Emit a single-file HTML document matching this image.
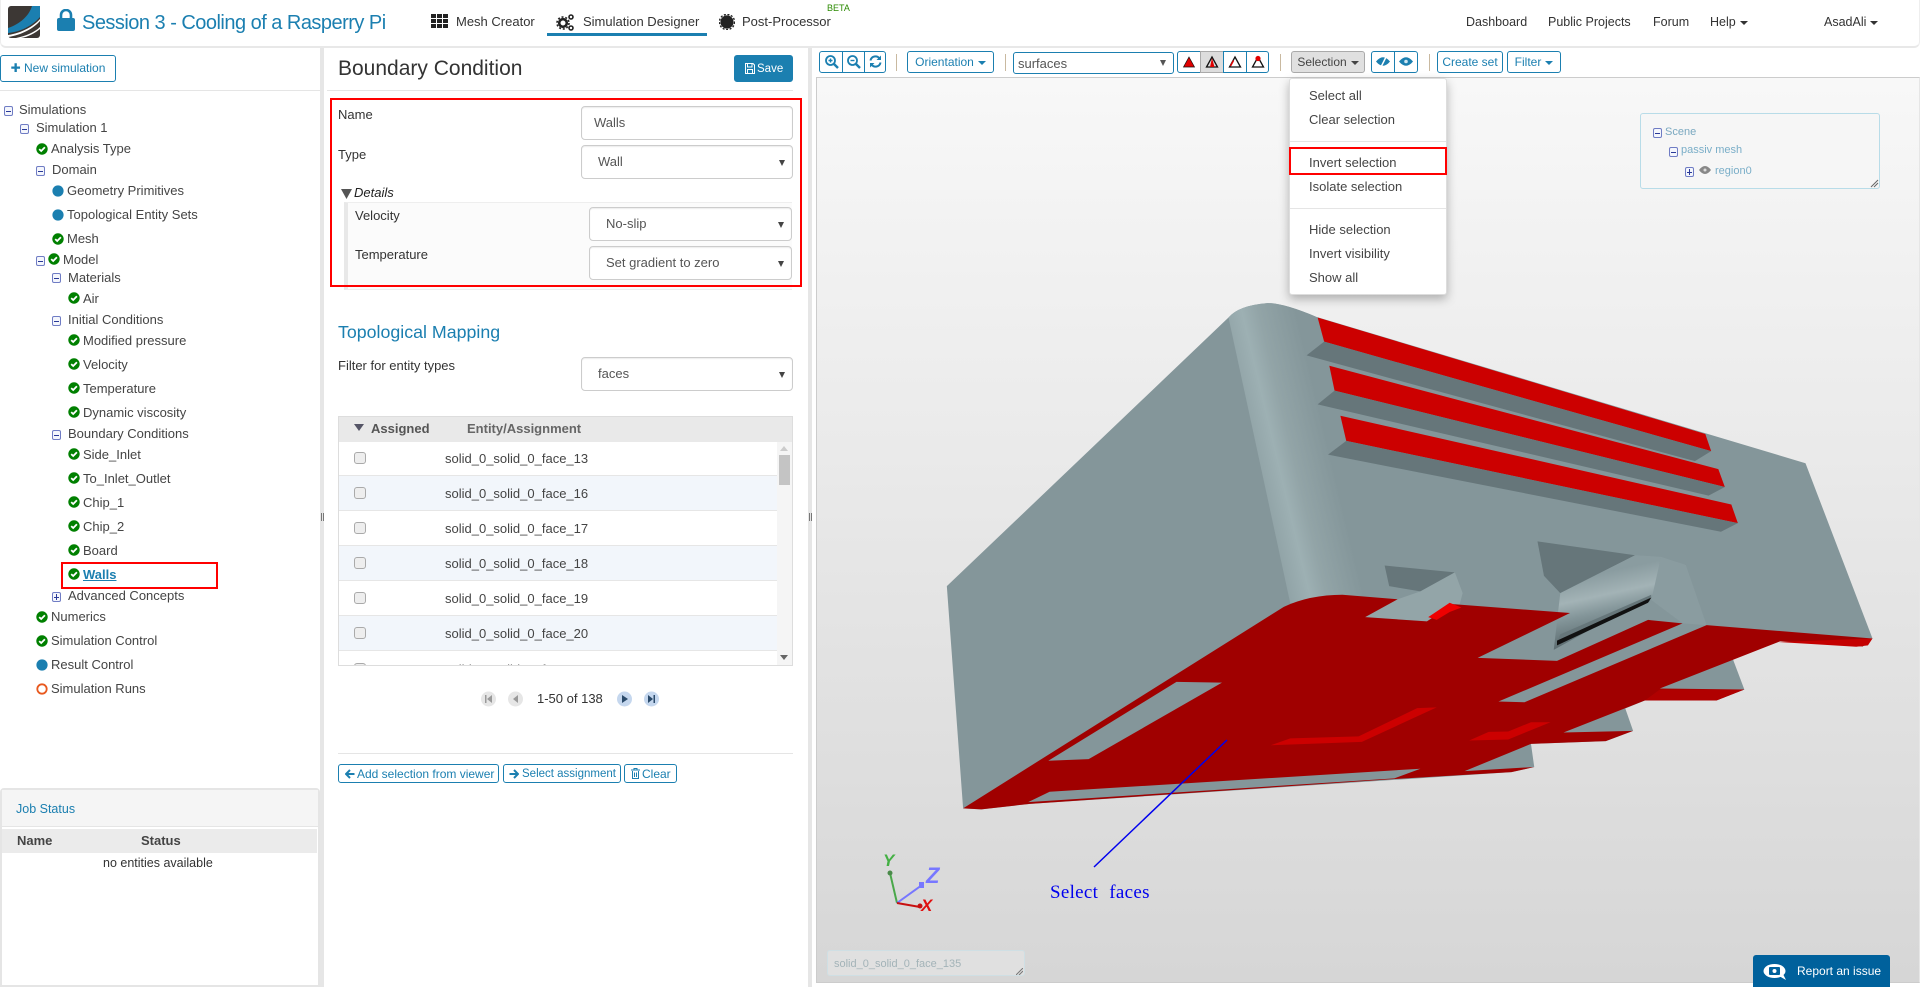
<!DOCTYPE html>
<html><head><meta charset="utf-8"><title>Boundary Condition</title>
<style>
*{box-sizing:border-box}
html,body{margin:0;padding:0;width:1920px;height:987px;overflow:hidden;background:#fff;font-family:"Liberation Sans",sans-serif;color:#444}
.a,.t,.b,.s,.tb,.i{position:absolute}
.t{white-space:nowrap;font-size:13px;line-height:20px;height:20px}
.i{display:block;width:12px;height:12px}
.bx{position:absolute;width:9px;height:10px;border:1px solid #6f7cc4;border-radius:2px;background:#f4f6fc}
.bx:after{content:"";position:absolute;left:1px;right:1px;top:3.500px;height:1.400px;background:#2a3a98}
.bx.p:before{content:"";position:absolute;left:3px;top:1px;bottom:1px;width:1.400px;background:#2a3a98}
.s{background:#fff;border:1px solid #ccc;border-radius:4px;font-size:13px;color:#555;line-height:32px;box-shadow:inset 0 1px 1px rgba(0,0,0,.075)}
.s.sel:after{content:"";position:absolute;right:7px;top:14px;border:3px solid transparent;border-top:6px solid #444;border-bottom:0}
.b{background:#fff;border:1px solid #1b7fb0;border-radius:3px;color:#1b7fb0;font-size:12px;text-align:center;white-space:nowrap}
.tb{height:22px;top:51px;background:#fff;border:1px solid #1b7fb0;color:#1b7fb0;font-size:12px;line-height:21px;text-align:center;white-space:nowrap;border-radius:3px}
.car{display:inline-block;width:0;height:0;border:4px solid transparent;border-top:4px solid currentColor;border-bottom:0;vertical-align:middle;margin-left:4px}
.sp{position:absolute;top:54px;width:1px;height:17px;background:#c9b9a0}
.cb{position:absolute;left:354px;width:12px;height:12px;border:1px solid #aaa;border-radius:3px;background:#eee}
.row{position:absolute;left:339px;width:438px;height:35px;border-bottom:1px solid #e6e6e6;background:#fff}
.row.o{background:#f2f6fb}
.red{position:absolute;border:2px solid #f00}
.m{position:absolute;left:1309px;font-size:13px;color:#444;white-space:nowrap;line-height:20px}
.tb svg{display:block;margin:2px auto 0}
</style></head><body>
<svg width="0" height="0" style="position:absolute"><defs>
<symbol id="ck" viewBox="0 0 12 12"><circle cx="6" cy="6" r="5.700" fill="#008000"/><path d="M3.200 6.100 5.200 8 8.900 4.200" fill="none" stroke="#fff" stroke-width="1.800"/></symbol>
<symbol id="dt" viewBox="0 0 12 12"><circle cx="6" cy="6" r="5.600" fill="#1b7fb0"/></symbol>
<symbol id="tri" viewBox="0 0 16 16"><path d="M8 3 13.500 13H2.500Z" fill="none" stroke="#111" stroke-width="1.300"/></symbol>
</defs></svg>

<!-- header -->
<div class="a" style="left:0;top:0;width:1920px;height:48px;border-bottom:2px solid #e8e8e8;border-left:1px solid #eee;border-right:1px solid #eee;border-radius:0 0 6px 6px"></div>
<svg class="a" style="left:8px;top:6px" width="32" height="32" viewBox="0 0 32 32"><rect width="32" height="32" rx="3" fill="#3c3734"/><path d="M0 22C12 18 21 10 24 0H32V11C24 20 12 26 0 27Z" fill="#1b7fb0"/><path d="M0 29C14 27 26 20 32 13V15C26 22 14 29 0 31Z" fill="#fff"/><path d="M8 32C18 30 27 26 32 21V23C27 27 20 31 13 32Z" fill="#fff"/></svg>
<svg class="a" style="left:57px;top:9px" width="18" height="22" viewBox="0 0 18 22"><path d="M4 10V6a5 5 0 0 1 10 0v4" fill="none" stroke="#1b7fb0" stroke-width="2.600"/><rect y="9" width="18" height="13" rx="2" fill="#1b7fb0"/></svg>
<div class="t" style="left:82px;top:13px;font-size:20px;letter-spacing:-.52px;color:#1b7fb0">Session 3 - Cooling of a Rasperry Pi</div>
<svg class="a" style="left:431px;top:14px" width="17" height="14" viewBox="0 0 17 14" fill="#222"><rect width="5" height="4"/><rect x="6" width="5" height="4"/><rect x="12" width="5" height="4"/><rect y="5" width="5" height="4"/><rect x="6" y="5" width="5" height="4"/><rect x="12" y="5" width="5" height="4"/><rect y="10" width="5" height="4"/><rect x="6" y="10" width="5" height="4"/><rect x="12" y="10" width="5" height="4"/></svg>
<div class="t" style="left:456px;top:12px;color:#333">Mesh Creator</div>
<svg class="a" style="left:556px;top:13px" width="19" height="18" viewBox="0 0 19 18"><circle cx="7" cy="10" r="3.800" fill="none" stroke="#222" stroke-width="2.600"/><circle cx="7" cy="10" r="6" fill="none" stroke="#222" stroke-width="1.600" stroke-dasharray="2 1.800"/><circle cx="15" cy="4" r="2" fill="none" stroke="#222" stroke-width="1.600"/><circle cx="15" cy="15" r="2" fill="none" stroke="#222" stroke-width="1.600"/></svg>
<div class="t" style="left:583px;top:12px;color:#333">Simulation Designer</div>
<div class="a" style="left:547px;top:33px;width:160px;height:3px;background:#1b7fb0"></div>
<svg class="a" style="left:719px;top:14px" width="16" height="16" viewBox="0 0 16 16"><circle cx="8" cy="8" r="6.600" fill="#222"/><circle cx="8" cy="8" r="7.600" fill="none" stroke="#222" stroke-width="1.400" stroke-dasharray="2 1.600"/></svg>
<div class="t" style="left:742px;top:12px;color:#333">Post-Processor</div>
<div class="t" style="left:827px;top:-2px;font-size:9px;color:#2a8a00">BETA</div>
<div class="t" style="left:1466px;top:12px;color:#333;font-size:12.500px">Dashboard</div>
<div class="t" style="left:1548px;top:12px;color:#333;font-size:12.500px">Public Projects</div>
<div class="t" style="left:1653px;top:12px;color:#333;font-size:12.500px">Forum</div>
<div class="t" style="left:1710px;top:12px;color:#333;font-size:12.500px">Help<span class="car"></span></div>
<div class="t" style="left:1824px;top:12px;color:#333;font-size:12.500px">AsadAli<span class="car"></span></div>

<!-- dividers -->
<div class="a" style="left:320px;top:48px;width:4px;height:939px;background:#e6e6e6"></div>
<div class="a" style="left:808px;top:48px;width:4px;height:939px;background:#e6e6e6"></div>
<div class="a" style="left:321px;top:513px;width:3px;height:8px;border-left:1px solid #777;border-right:1px solid #777"></div>
<div class="a" style="left:809px;top:513px;width:3px;height:8px;border-left:1px solid #777;border-right:1px solid #777"></div>

<!-- left panel -->
<div class="b" style="left:0;top:55px;width:116px;height:27px;line-height:25px">✚ New simulation</div>
<div class="a" style="left:0;top:90px;width:320px;height:1px;background:#e5e5e5"></div>

<span class="bx" style="left:4px;top:106px"></span><div class="t" style="left:19px;top:100px">Simulations</div>
<span class="bx" style="left:20px;top:124px"></span><div class="t" style="left:36px;top:118px">Simulation 1</div>
<svg class="i" style="left:36px;top:143px"><use href="#ck"/></svg><div class="t" style="left:51px;top:139px">Analysis Type</div>
<span class="bx" style="left:36px;top:166px"></span><div class="t" style="left:52px;top:160px">Domain</div>
<svg class="i" style="left:52px;top:185px"><use href="#dt"/></svg><div class="t" style="left:67px;top:181px">Geometry Primitives</div>
<svg class="i" style="left:52px;top:209px"><use href="#dt"/></svg><div class="t" style="left:67px;top:205px">Topological Entity Sets</div>
<svg class="i" style="left:52px;top:233px"><use href="#ck"/></svg><div class="t" style="left:67px;top:229px">Mesh</div>
<span class="bx" style="left:36px;top:256px"></span><svg class="i" style="left:48px;top:253px"><use href="#ck"/></svg><div class="t" style="left:63px;top:250px">Model</div>
<span class="bx" style="left:52px;top:273px"></span><div class="t" style="left:68px;top:268px">Materials</div>
<svg class="i" style="left:68px;top:292px"><use href="#ck"/></svg><div class="t" style="left:83px;top:289px">Air</div>
<span class="bx" style="left:52px;top:316px"></span><div class="t" style="left:68px;top:310px">Initial Conditions</div>
<svg class="i" style="left:68px;top:334px"><use href="#ck"/></svg><div class="t" style="left:83px;top:331px">Modified pressure</div>
<svg class="i" style="left:68px;top:358px"><use href="#ck"/></svg><div class="t" style="left:83px;top:355px">Velocity</div>
<svg class="i" style="left:68px;top:382px"><use href="#ck"/></svg><div class="t" style="left:83px;top:379px">Temperature</div>
<svg class="i" style="left:68px;top:406px"><use href="#ck"/></svg><div class="t" style="left:83px;top:403px">Dynamic viscosity</div>
<span class="bx" style="left:52px;top:430px"></span><div class="t" style="left:68px;top:424px">Boundary Conditions</div>
<svg class="i" style="left:68px;top:448px"><use href="#ck"/></svg><div class="t" style="left:83px;top:445px">Side_Inlet</div>
<svg class="i" style="left:68px;top:472px"><use href="#ck"/></svg><div class="t" style="left:83px;top:469px">To_Inlet_Outlet</div>
<svg class="i" style="left:68px;top:496px"><use href="#ck"/></svg><div class="t" style="left:83px;top:493px">Chip_1</div>
<svg class="i" style="left:68px;top:520px"><use href="#ck"/></svg><div class="t" style="left:83px;top:517px">Chip_2</div>
<svg class="i" style="left:68px;top:544px"><use href="#ck"/></svg><div class="t" style="left:83px;top:541px">Board</div>
<svg class="i" style="left:68px;top:568px"><use href="#ck"/></svg><div class="t" style="left:83px;top:565px;color:#1b7fb0;font-weight:bold;text-decoration:underline">Walls</div>
<div class="red" style="left:61px;top:562px;width:157px;height:27px"></div>
<span class="bx p" style="left:52px;top:592px"></span><div class="t" style="left:68px;top:586px">Advanced Concepts</div>
<svg class="i" style="left:36px;top:611px"><use href="#ck"/></svg><div class="t" style="left:51px;top:607px">Numerics</div>
<svg class="i" style="left:36px;top:635px"><use href="#ck"/></svg><div class="t" style="left:51px;top:631px">Simulation Control</div>
<svg class="i" style="left:36px;top:659px"><use href="#dt"/></svg><div class="t" style="left:51px;top:655px">Result Control</div>
<svg class="i" style="left:36px;top:683px" viewBox="0 0 12 12"><circle cx="6" cy="6" r="4.700" fill="none" stroke="#e8591f" stroke-width="1.800"/></svg><div class="t" style="left:51px;top:679px">Simulation Runs</div>

<!-- job status -->
<div class="a" style="left:0;top:788px;width:320px;height:199px;border:2px solid #e5e5e5;border-radius:4px 4px 0 0;background:#fff"></div>
<div class="a" style="left:2px;top:790px;width:316px;height:37px;background:#f5f5f5;border-bottom:1px solid #e5e5e5"></div>
<div class="t" style="left:16px;top:799px;color:#1b7fb0;font-size:12.500px">Job Status</div>
<div class="a" style="left:2px;top:829px;width:315px;height:24px;background:#ebebeb"></div>
<div class="t" style="left:17px;top:831px;font-weight:bold;color:#444">Name</div>
<div class="t" style="left:141px;top:831px;font-weight:bold;color:#444">Status</div>
<div class="t" style="left:103px;top:853px;font-size:12.500px;color:#333">no entities available</div>

<!-- middle panel -->
<div class="t" style="left:338px;top:59px;font-size:21px;color:#333">Boundary Condition</div>
<div class="b" style="left:734px;top:55px;width:59px;height:27px;background:#1b7fb0;color:#fff"></div>
<svg class="a" style="left:745px;top:63px" width="10" height="11" viewBox="0 0 10 11"><path d="M.5.500H8L9.500 2V10.500H.5Z" fill="none" stroke="#fff"/><path d="M2.500 1V4H7V1M2.500 10V6.500H7.500V10" fill="none" stroke="#fff"/></svg>
<div class="t" style="left:757px;top:59px;font-size:11.500px;color:#fff">Save</div>
<div class="a" style="left:327px;top:90px;width:466px;height:1px;background:#e5e5e5"></div>

<div class="t" style="left:338px;top:105px;color:#333">Name</div>
<div class="s" style="left:581px;top:106px;width:212px;height:34px;padding-left:12px">Walls</div>
<div class="t" style="left:338px;top:145px;color:#333">Type</div>
<div class="s sel" style="left:581px;top:145px;width:212px;height:34px;padding-left:16px">Wall</div>
<svg class="a" style="left:341px;top:189px" width="11" height="10"><path d="M0 0H11L5.500 10Z" fill="#555"/></svg>
<div class="t" style="left:354px;top:183px;font-style:italic;color:#222">Details</div>
<div class="a" style="left:344px;top:202px;width:448px;height:88px;background:#fbfbfb;border-left:4px solid #e8e8e8;border-top:1px solid #eee;border-bottom:1px solid #eee"></div>
<div class="t" style="left:355px;top:206px;color:#333">Velocity</div>
<div class="s sel" style="left:589px;top:207px;width:203px;height:34px;padding-left:16px">No-slip</div>
<div class="t" style="left:355px;top:245px;color:#333">Temperature</div>
<div class="s sel" style="left:589px;top:246px;width:203px;height:34px;padding-left:16px">Set gradient to zero</div>
<div class="red" style="left:330px;top:98px;width:472px;height:189px"></div>

<div class="t" style="left:338px;top:322px;font-size:17.800px;color:#1b7fb0">Topological Mapping</div>
<div class="t" style="left:338px;top:356px;color:#333">Filter for entity types</div>
<div class="s sel" style="left:581px;top:357px;width:212px;height:34px;padding-left:16px">faces</div>

<!-- table -->
<div class="a" style="left:338px;top:416px;width:455px;height:250px;border:1px solid #ddd;overflow:hidden;background:#fff">
<div class="row" style="left:0;top:24px;width:438px"></div>
<div class="row o" style="left:0;top:59px;width:438px"></div>
<div class="row" style="left:0;top:94px;width:438px"></div>
<div class="row o" style="left:0;top:129px;width:438px"></div>
<div class="row" style="left:0;top:164px;width:438px"></div>
<div class="row o" style="left:0;top:199px;width:438px"></div>
<div class="cb" style="left:15px;top:246px"></div>
<div class="t" style="left:106px;top:243px">solid_0_solid_0_face_22</div>
</div>
<div class="a" style="left:339px;top:417px;width:453px;height:25px;background:#e9e9e9"></div>
<svg class="a" style="left:354px;top:424px" width="10" height="8"><path d="M0 0H10L5 7Z" fill="#556"/></svg>
<div class="t" style="left:371px;top:419px;font-weight:bold;color:#555">Assigned</div>
<div class="t" style="left:467px;top:419px;font-weight:bold;color:#666">Entity/Assignment</div>
<div class="cb" style="top:452px"></div><div class="t" style="left:445px;top:449px">solid_0_solid_0_face_13</div>
<div class="cb" style="top:487px"></div><div class="t" style="left:445px;top:484px">solid_0_solid_0_face_16</div>
<div class="cb" style="top:522px"></div><div class="t" style="left:445px;top:519px">solid_0_solid_0_face_17</div>
<div class="cb" style="top:557px"></div><div class="t" style="left:445px;top:554px">solid_0_solid_0_face_18</div>
<div class="cb" style="top:592px"></div><div class="t" style="left:445px;top:589px">solid_0_solid_0_face_19</div>
<div class="cb" style="top:627px"></div><div class="t" style="left:445px;top:624px">solid_0_solid_0_face_20</div>
<div class="a" style="left:777px;top:442px;width:15px;height:223px;background:#f5f5f5"></div>
<div class="a" style="left:779px;top:455px;width:11px;height:30px;background:#c4c4c4"></div>
<svg class="a" style="left:780px;top:446px" width="9" height="6"><path d="M0 5H8L4 0Z" fill="#ccc"/></svg>
<svg class="a" style="left:780px;top:655px" width="9" height="6"><path d="M0 0H8L4 5Z" fill="#666"/></svg>

<svg class="a" style="left:481px;top:691px" width="180" height="16" viewBox="0 0 180 16">
<circle cx="7.500" cy="8" r="7.500" fill="#e6e6e6"/><path d="M4 4h1.500v8H4ZM11 4v8L6 8Z" fill="#999"/>
<circle cx="34.500" cy="8" r="7.500" fill="#e6e6e6"/><path d="M37 4v8l-5-4Z" fill="#999"/>
<circle cx="143.500" cy="8" r="7.500" fill="#c5d7ee"/><path d="M141 4v8l6-4Z" fill="#2a4a6a"/>
<circle cx="170.500" cy="8" r="7.500" fill="#c5d7ee"/><path d="M167 4v8l5-4ZM172.500 4h1.500v8h-1.500Z" fill="#2a4a6a"/>
</svg>
<div class="t" style="left:537px;top:689px;color:#333">1-50 of 138</div>

<div class="a" style="left:338px;top:753px;width:455px;height:1px;background:#e5e5e5"></div>
<div class="b" style="left:338px;top:764px;width:161px;height:19px"></div>
<svg class="a" style="left:345px;top:769px" width="10" height="10"><path d="M5 1 1 5 5 9M1.500 5H9.500" fill="none" stroke="#1b7fb0" stroke-width="2"/></svg>
<div class="t" style="left:357px;top:764px;font-size:12px;color:#1b7fb0">Add selection from viewer</div>
<div class="b" style="left:503px;top:764px;width:118px;height:19px"></div>
<svg class="a" style="left:509px;top:769px" width="10" height="10"><path d="M5 1 9 5 5 9M.5 5H8.500" fill="none" stroke="#1b7fb0" stroke-width="2"/></svg>
<div class="t" style="left:522px;top:764px;font-size:11.500px;color:#1b7fb0">Select assignment</div>
<div class="b" style="left:624px;top:764px;width:53px;height:19px"></div>
<svg class="a" style="left:631px;top:768px" width="9" height="11"><path d="M0 2H9M3 2V.5H6V2M1.500 3V10.500H7.500V3M3.500 4.500V9M5.500 4.500V9" fill="none" stroke="#1b7fb0"/></svg>
<div class="t" style="left:642px;top:764px;font-size:12px;color:#1b7fb0">Clear</div>

<!-- viewer -->
<div class="a" style="left:816px;top:77px;width:1104px;height:906px;border:1px solid #ccc;border-right:1px solid #e6e6e6;background:linear-gradient(#f8f8f8,#d6d6d6)"></div>

<svg class="a" style="left:0;top:0" width="1920" height="987">
<defs><linearGradient id="hl" gradientUnits="userSpaceOnUse" x1="510" y1="480" x2="660" y2="461"><stop offset="0" stop-color="#84969a"/><stop offset=".45" stop-color="#9db0b3"/><stop offset=".62" stop-color="#92a4a7"/><stop offset="1" stop-color="#84969a"/></linearGradient>
<linearGradient id="band" gradientUnits="userSpaceOnUse" x1="1070" y1="825" x2="1135" y2="985"><stop offset="0" stop-color="#8a9ca0"/><stop offset=".35" stop-color="#a3b3b6"/><stop offset=".6" stop-color="#84969a"/><stop offset="1" stop-color="#5f6f73"/></linearGradient></defs>
<g transform="translate(900,290) scale(.6505,.3444)">
<path d="M72 860 505 80Q520 45 565 38 590 38 640 78L1392 503 1495 1012 1353 1020 1280 1070 1298 1160 1255 1192 1145 1192 1115 1215 1127 1280 1085 1310 970 1318 975 1385 940 1400 200 1492 125 1508 97 1505Z" fill="#84969a"/>
<path d="M505 80Q520 45 565 38 590 38 640 78L720 885 600 910Z" fill="url(#hl)"/>
<path d="M642 80 1238 418 1247 468 652 150Z" fill="#cc0000"/><path d="M652 150 1247 468 1222 497 625 190Z" fill="#66767a"/>
<path d="M660 220 1258 520 1268 572 668 292Z" fill="#cc0000"/><path d="M668 292 1268 572 1243 597 642 332Z" fill="#66767a"/>
<path d="M677 365 1278 623 1288 677 686 438Z" fill="#cc0000"/><path d="M686 438 1288 677 1262 702 658 478Z" fill="#66767a"/>
<path d="M745 800 853 820 800 875 752 860Z" fill="#66767a"/>
<path d="M853 820 865 880 860 915 810 962 715 950 765 898 800 875Z" fill="#93a5a8"/>
<path d="M980 730 1130 770 1015 880 990 830Z" fill="#66767a"/>
<path d="M1175 790 1208 798 1178 825Z" fill="#66767a"/>
<path d="M1130 770 1170 775 1158 885 1005 1045 1015 880Z" fill="url(#band)"/>
<path d="M1170 775 1208 798 1240 973 1203 968 1155 900Z" fill="#8a9ca0"/>
<path d="M97 1505 590 920Q630 885 680 885L765 898 715 950 810 962 850 912 1030 938 888 1068 1010 1077 1150 958 1203 968 920 1195 960 1197 1240 973 1495 1012 1480 1035 1353 1020 1168 1157 1298 1160 1255 1192 1145 1192 1020 1285 1127 1280 1085 1310 970 1318 868 1397 975 1385 940 1400 760 1420 200 1492 125 1508Z" fill="#a00000"/>
<path d="M1015 1000 1155 885 1152 905 1008 1030Z" fill="#66767a"/><path d="M1010 1018 1155 893 1150 908 1010 1032Z" fill="#111"/>
<path d="M425 1138 495 1140 290 1362 228 1367Z" fill="#84969a"/>
<path d="M230 1457 800 1390 760 1418 197 1487Z" fill="#84969a"/>
<path d="M570 1322 600 1302 705 1296 795 1214 825 1212 710 1312Z" fill="#cc0000"/>
<path d="M875 1308 905 1283 935 1282 970 1255 1000 1255 935 1305Z" fill="#cc0000"/>
<path d="M1350 1022 1495 1012 1488 1032 1470 1036Z" fill="#c40000"/>
<path d="M1168 1160 1298 1160 1255 1192 1145 1192Z" fill="#b00000"/>
<path d="M845 908 863 922 845 935 825 958 812 950Z" fill="#ee0000"/>
</g>
<path d="M1227 740 1094 867" stroke="#0000ee" stroke-width="1.500" fill="none"/>
<g stroke-width="2" fill="none"><path d="M890 873 897 903" stroke="#4aa84a"/><path d="M897 903 922 885" stroke="#7777ff"/><path d="M897 903 920 907" stroke="#c81010"/></g>
<circle cx="890" cy="873" r="2.500" fill="#4a8a4a"/><rect x="919" y="882" width="5" height="6" fill="#7777ff"/><circle cx="920" cy="906" r="2.500" fill="#c81010"/>
<text x="883" y="866" font-family="Liberation Sans" font-size="17" font-weight="bold" font-style="italic" fill="#44b044">Y</text>
<text x="926" y="883" font-family="Liberation Sans" font-size="22" font-weight="bold" font-style="italic" fill="#7777ff">Z</text>
<text x="921" y="911" font-family="Liberation Sans" font-size="17" font-weight="bold" font-style="italic" fill="#e01010">X</text>
</svg>
<div class="t" style="left:1050px;top:883px;font-family:'Liberation Serif',serif;font-size:19px;color:#0000ee;letter-spacing:.3px;word-spacing:6px">Select faces</div>

<!-- toolbar -->
<div class="tb" style="left:819px;width:24px;border-radius:3px 0 0 3px"><svg width="15" height="15" viewBox="0 0 15 15"><circle cx="6.500" cy="6.500" r="4.500" fill="none" stroke="#1b7fb0" stroke-width="1.800"/><path d="M10 10 14 14" stroke="#1b7fb0" stroke-width="2.400"/><path d="M4.500 6.500H8.500M6.500 4.500V8.500" stroke="#1b7fb0" stroke-width="1.400"/></svg></div>
<div class="tb" style="left:842px;width:23px;border-radius:0"><svg width="15" height="15" viewBox="0 0 15 15"><circle cx="6.500" cy="6.500" r="4.500" fill="none" stroke="#1b7fb0" stroke-width="1.800"/><path d="M10 10 14 14" stroke="#1b7fb0" stroke-width="2.400"/><path d="M4.500 6.500H8.500" stroke="#1b7fb0" stroke-width="1.400"/></svg></div>
<div class="tb" style="left:864px;width:22px;border-radius:0 3px 3px 0"><svg width="15" height="15" viewBox="0 0 15 15"><path d="M2.500 6.500A5 5 0 0 1 11.500 4.500M12.500 8.500A5 5 0 0 1 3.500 10.500" fill="none" stroke="#1b7fb0" stroke-width="2"/><path d="M13 1.500V6H8.500ZM2 13.500V9H6.500Z" fill="#1b7fb0"/></svg></div>
<div class="sp" style="left:896px"></div>
<div class="tb" style="left:907px;width:87px">Orientation<span class="car"></span></div>
<div class="sp" style="left:1005px"></div>
<div class="tb" style="left:1013px;top:52px;width:161px;color:#555;text-align:left;padding-left:4px;font-size:13px">surfaces<span class="a" style="right:7px;top:7px;border:3px solid transparent;border-top:6px solid #555;border-bottom:0"></span></div>
<div class="tb" style="left:1177px;width:24px;border-radius:3px 0 0 3px"><svg width="16" height="16"><path d="M8 3 13.500 13H2.500Z" fill="#e00000" stroke="#111" stroke-width=".7"/></svg></div>
<div class="tb" style="left:1200px;width:24px;border-radius:0;background:#ddd;border-color:#aaa"><svg width="16" height="16"><use href="#tri"/><path d="M8 4 10.500 13H6Z" fill="#e00000"/></svg></div>
<div class="tb" style="left:1223px;width:24px;border-radius:0"><svg width="16" height="16"><use href="#tri"/><path d="M3.500 12 6.500 6.500" stroke="#e00000" stroke-width="1.500"/></svg></div>
<div class="tb" style="left:1246px;width:23px;border-radius:0 3px 3px 0"><svg width="16" height="16"><use href="#tri"/><circle cx="8" cy="4.500" r="2.600" fill="#e00000"/></svg></div>
<div class="sp" style="left:1280px"></div>
<div class="tb" style="left:1291px;width:74px;background:#e0e0e0;border-color:#aaa;color:#444">Selection<span class="car"></span></div>
<div class="tb" style="left:1371px;width:24px;border-radius:3px 0 0 3px"><svg width="14" height="12" style="margin-top:4px"><path d="M0 5.500Q7-3 14 5.500 7 14 0 5.500Z" fill="#1b7fb0"/><path d="M10.500 0 5 11" stroke="#fff" stroke-width="1.500"/></svg></div>
<div class="tb" style="left:1394px;width:24px;border-radius:0 3px 3px 0"><svg width="14" height="12" style="margin-top:4px"><path d="M0 5.500Q7-3 14 5.500 7 14 0 5.500Z" fill="#1b7fb0"/><circle cx="7" cy="5.500" r="1.800" fill="#cfe6f2"/></svg></div>
<div class="sp" style="left:1429px"></div>
<div class="tb" style="left:1437px;width:66px">Create set</div>
<div class="tb" style="left:1507px;width:54px">Filter<span class="car"></span></div>

<!-- scene tree -->
<div class="a" style="left:1640px;top:113px;width:240px;height:76px;border:1px solid #b8dce8;border-radius:3px;background:#f6f6f6"></div>
<span class="bx" style="left:1653px;top:128px"></span><div class="t" style="left:1665px;top:122px;font-size:11px;color:#7aa8c0">Scene</div>
<span class="bx" style="left:1669px;top:147px"></span><div class="t" style="left:1681px;top:140px;font-size:11px;color:#7aaec8">passiv mesh</div>
<span class="bx p" style="left:1685px;top:167px"></span>
<svg class="a" style="left:1699px;top:165px" width="12" height="10"><path d="M0 5Q6-3 12 5 6 13 0 5Z" fill="#888"/><circle cx="6" cy="5" r="1.500" fill="#ddd"/></svg>
<div class="t" style="left:1715px;top:161px;font-size:11px;color:#7aaec8">region0</div>
<svg class="a" style="left:1870px;top:179px" width="9" height="9"><path d="M1 8 8 1M4 8 8 4" stroke="#666"/></svg>

<!-- dropdown -->
<div class="a" style="left:1289px;top:78px;width:158px;height:217px;background:#fff;border:1px solid #ddd;border-radius:3px;box-shadow:0 4px 10px rgba(0,0,0,.28)"></div>
<div class="a" style="left:1290px;top:141px;width:156px;height:1px;background:#e5e5e5"></div>
<div class="a" style="left:1290px;top:208px;width:156px;height:1px;background:#e5e5e5"></div>
<div class="m" style="top:86px">Select all</div>
<div class="m" style="top:110px">Clear selection</div>
<div class="m" style="top:153px">Invert selection</div>
<div class="m" style="top:177px">Isolate selection</div>
<div class="m" style="top:220px">Hide selection</div>
<div class="m" style="top:244px">Invert visibility</div>
<div class="m" style="top:268px">Show all</div>
<div class="red" style="left:1289px;top:147px;width:158px;height:28px"></div>

<!-- bottom -->
<div class="a" style="left:827px;top:950px;width:198px;height:26px;background:#e0e0e0;border:1px solid #cfdfe4;border-radius:3px"></div>
<div class="t" style="left:834px;top:954px;font-size:11px;color:#a3b3b8">solid_0_solid_0_face_135</div>
<svg class="a" style="left:1016px;top:968px" width="7" height="7"><path d="M0 7 7 0M3 7 7 3" stroke="#777"/></svg>
<div class="a" style="left:1753px;top:955px;width:137px;height:32px;background:#00619c;border-radius:3px 3px 0 0"></div>
<svg class="a" style="left:1763px;top:963px" width="24" height="18" viewBox="0 0 24 18"><ellipse cx="11.500" cy="8" rx="11" ry="7" fill="#fff"/><path d="M16 13l7 4-3-6Z" fill="#fff"/><rect x="6" y="4" width="11" height="8" rx="1" fill="#00619c"/><circle cx="11.500" cy="8" r="2" fill="#fff"/></svg>
<div class="t" style="left:1797px;top:961px;font-size:12px;color:#fff">Report an issue</div>
</body></html>
